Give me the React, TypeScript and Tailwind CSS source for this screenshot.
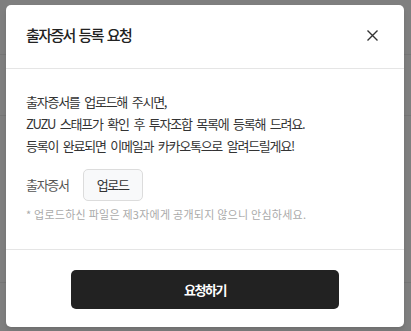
export default function App() {
  return (
    <div
      className="relative h-[331px] w-[411px] overflow-hidden bg-[#7f7f7f]"
      style={{ fontFamily: '"Noto Sans CJK KR", "Noto Sans", sans-serif' }}
    >
      {/* faint page lines behind the overlay */}
      <div className="absolute left-0 right-0 top-[54px] h-px bg-[#767676]" />
      <div className="absolute left-0 right-0 top-[115px] h-px bg-[#767676]" />
      <div className="absolute left-0 right-0 top-[282px] h-px bg-[#767676]" />

      <div className="absolute left-[6px] top-[5px] flex h-[322px] w-[398px] flex-col rounded-[5px] bg-white shadow-md">
        <div className="flex h-[64px] items-center justify-between border-b border-[#e5e5e5] px-5 pb-[3px]">
          <h2 className="text-[15px] font-medium tracking-[-1.6px] text-[#222] [word-spacing:2px]">
            출자증서 등록 요청
          </h2>
          <button className="flex h-6 w-6 items-center justify-center text-[#333]">
            <svg width="11" height="11" viewBox="0 0 11 11" fill="none" stroke="currentColor" strokeWidth="1.4">
              <path d="M0.5 0.5L10.5 10.5M10.5 0.5L0.5 10.5" />
            </svg>
          </button>
        </div>

        <div className="flex h-[181px] flex-col border-b border-[#e5e5e5] px-5 pt-[22px]">
          <p className="text-[13px] leading-[22px] tracking-[-1.25px] text-[#333] [word-spacing:3px]">
            출자증서를 업로드해 주시면,
            <br />
            ZUZU 스태프가 확인 후 투자조합 목록에 등록해 드려요.
            <br />
            등록이 완료되면 이메일과 카카오톡으로 알려드릴게요!
          </p>
          <div className="mt-3 flex items-center gap-[14px]">
            <span className="text-[13px] tracking-[-1.3px] text-[#555]">출자증서</span>
            <button className="h-8 w-[60px] rounded-[5px] border border-[#dcdcdc] bg-[#f8f9fa] text-[13px] tracking-[-1.3px] text-[#333]">
              업로드
            </button>
          </div>
          <p className="mt-1 text-[11px] leading-[18px] tracking-[0.25px] text-[#aaa]">
            * 업로드하신 파일은 제3자에게 공개되지 않으니 안심하세요.
          </p>
        </div>

        <div className="flex flex-1 items-start justify-center pt-5">
          <button className="h-[39px] w-[268px] rounded-[5px] bg-[#222] text-[13px] font-bold tracking-[-1.5px] text-white">
            요청하기
          </button>
        </div>
      </div>
    </div>
  );
}
